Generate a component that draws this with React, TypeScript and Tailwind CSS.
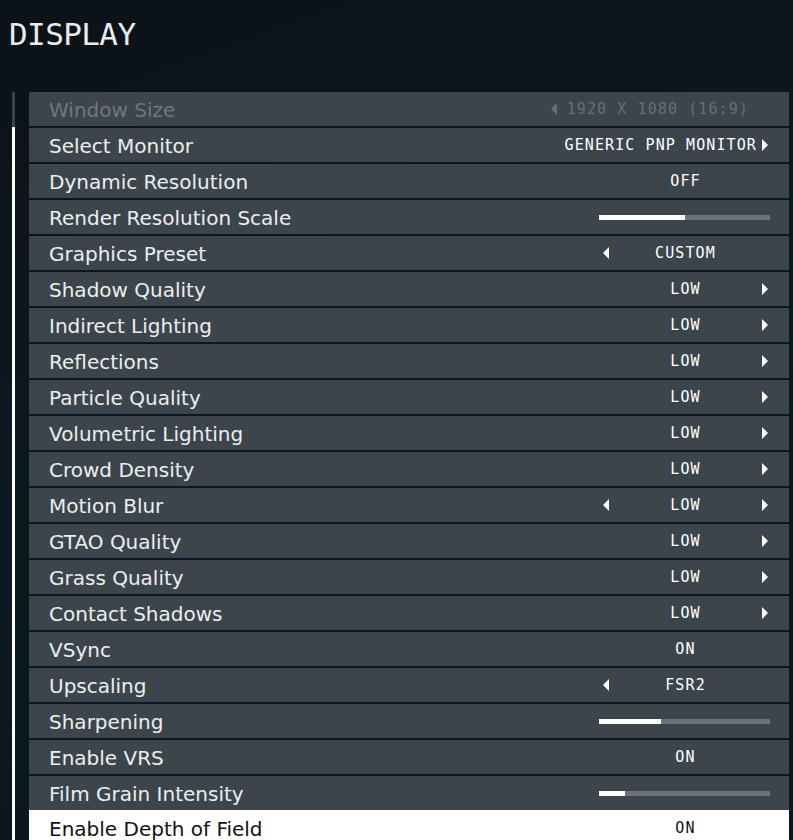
import React from "react";

type Row = {
  label: string;
  kind: "select" | "toggle" | "slider" | "wide";
  value?: string;
  left?: boolean;
  right?: boolean;
  fill?: number;
  dim?: boolean;
  active?: boolean;
};

const rows: Row[] = [
  { label: "Window Size", kind: "wide", value: "1920 X 1080 (16:9)", left: true, dim: true },
  { label: "Select Monitor", kind: "wide", value: "GENERIC PNP MONITOR", right: true },
  { label: "Dynamic Resolution", kind: "toggle", value: "OFF" },
  { label: "Render Resolution Scale", kind: "slider", fill: 50 },
  { label: "Graphics Preset", kind: "select", value: "CUSTOM", left: true },
  { label: "Shadow Quality", kind: "select", value: "LOW", right: true },
  { label: "Indirect Lighting", kind: "select", value: "LOW", right: true },
  { label: "Reflections", kind: "select", value: "LOW", right: true },
  { label: "Particle Quality", kind: "select", value: "LOW", right: true },
  { label: "Volumetric Lighting", kind: "select", value: "LOW", right: true },
  { label: "Crowd Density", kind: "select", value: "LOW", right: true },
  { label: "Motion Blur", kind: "select", value: "LOW", left: true, right: true },
  { label: "GTAO Quality", kind: "select", value: "LOW", right: true },
  { label: "Grass Quality", kind: "select", value: "LOW", right: true },
  { label: "Contact Shadows", kind: "select", value: "LOW", right: true },
  { label: "VSync", kind: "toggle", value: "ON" },
  { label: "Upscaling", kind: "select", value: "FSR2", left: true },
  { label: "Sharpening", kind: "slider", fill: 36 },
  { label: "Enable VRS", kind: "toggle", value: "ON" },
  { label: "Film Grain Intensity", kind: "slider", fill: 15 },
  { label: "Enable Depth of Field", kind: "toggle", value: "ON", active: true },
];

const mono = "font-['DejaVu_Sans_Mono','Liberation_Mono',monospace]";

function Arrow({ dir, className }: { dir: "left" | "right"; className: string }) {
  return (
    <svg width="6" height="12" viewBox="0 0 6 12" className={className}>
      {dir === "left" ? (
        <path d="M6 0 L0 6 L6 12 Z" fill="currentColor" />
      ) : (
        <path d="M0 0 L6 6 L0 12 Z" fill="currentColor" />
      )}
    </svg>
  );
}

function Value({ row }: { row: Row }) {
  const color = row.active ? "text-[#111]" : row.dim ? "text-[#676f74]" : "text-white";

  if (row.kind === "slider") {
    return (
      <div className="w-[174px] pl-[2px] pr-[1px]">
        <div className="h-[5px] w-full bg-[#6b7479]">
          <div className="h-full bg-white" style={{ width: `${row.fill}%` }} />
        </div>
      </div>
    );
  }

  if (row.kind === "wide") {
    return (
      <div className={`flex items-center justify-end ${color} ${row.dim ? "pr-[22px]" : "pr-[3px]"}`}>
        {row.left && <Arrow dir="left" className="mr-[10px] shrink-0" />}
        <span className={`${mono} font-medium text-[15px] leading-none tracking-[1.1px] whitespace-nowrap`}>
          {row.value}
        </span>
        {row.right && <Arrow dir="right" className="ml-[5px] shrink-0" />}
      </div>
    );
  }

  return (
    <div className={`w-[174px] flex items-center pl-[6px] pr-[3px] ${color}`}>
      <div className="w-[6px] flex items-center">
        {row.left && <Arrow dir="left" className="" />}
      </div>
      <span className={`${mono} font-medium flex-1 text-center text-[15px] leading-none tracking-[1.1px]`}>
        {row.value}
      </span>
      <div className="w-[6px] flex items-center">
        {row.right && <Arrow dir="right" className="" />}
      </div>
    </div>
  );
}

export default function App() {
  return (
    <div className="w-[793px] h-[840px] overflow-hidden bg-[linear-gradient(160deg,#0b1217_0%,#0c1820_45%,#0b161d_100%)] font-['DejaVu_Sans','Liberation_Sans',sans-serif]">
      {/* header */}
      <div className="h-[92px] pl-[9px] pt-[19px]">
        <h1 className={`${mono} text-[31px] leading-none tracking-[-0.6px] text-[#e9ebec]`}>DISPLAY</h1>
      </div>

      <div className="flex">
        {/* scrollbar */}
        <div className="ml-[12px] w-[3px] h-[748px] flex flex-col">
          <div className="h-[35px] bg-[#3a4248]" />
          <div className="flex-1 bg-white" />
        </div>

        {/* settings list */}
        <div className="ml-[14px] w-[760px] flex flex-col gap-[2px]">
          {rows.map((r) => (
            <div
              key={r.label}
              className={`h-[34px] shrink-0 flex items-center pl-[20px] pr-[18px] ${
                r.active ? "bg-white -mt-[2px] h-[36px]" : "bg-[#3c454b]"
              }`}
            >
              <span
                className={`flex-1 pt-[1px] text-[20px] leading-none whitespace-nowrap ${
                  r.active ? "text-[#111]" : r.dim ? "text-[#70777b]" : "text-[#eceeef]"
                }`}
              >
                {r.label}
              </span>
              <Value row={r} />
            </div>
          ))}
        </div>
      </div>
    </div>
  );
}
